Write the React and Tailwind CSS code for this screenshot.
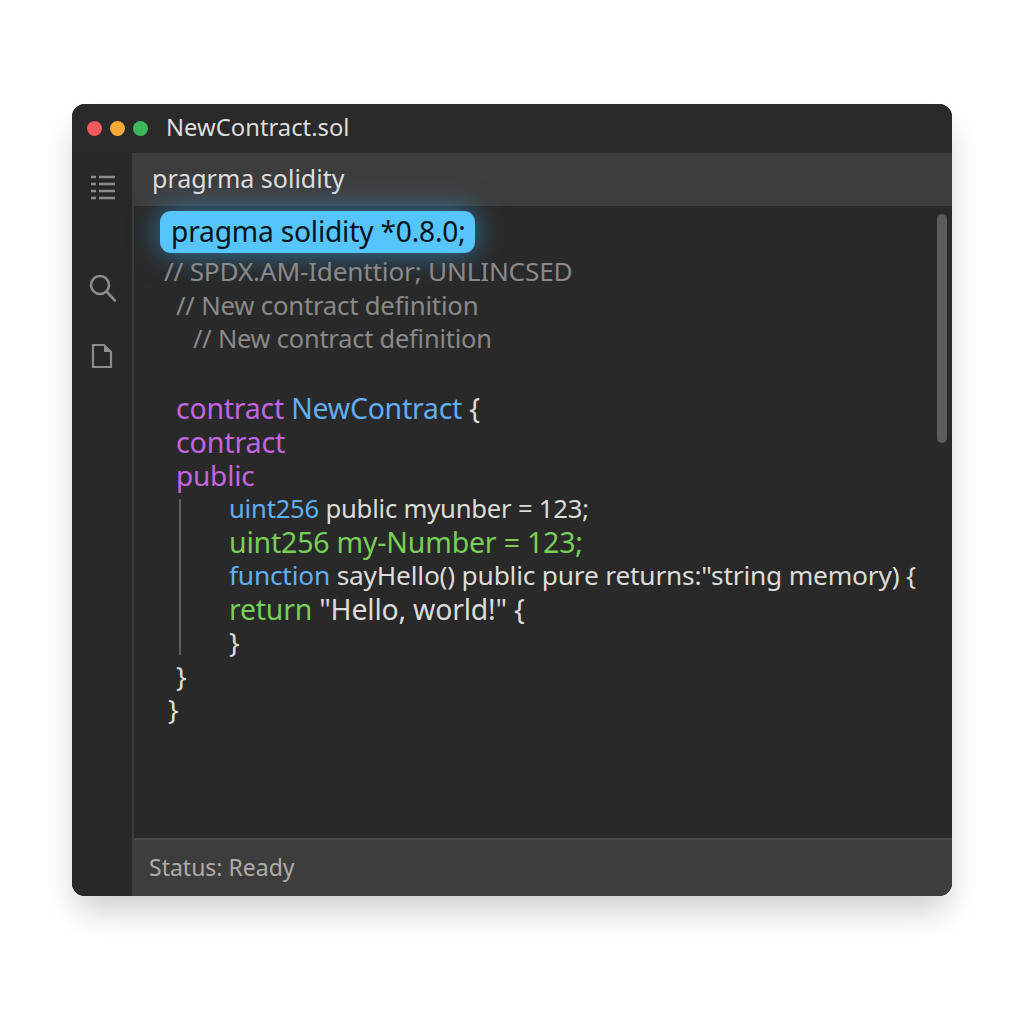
import React from 'react';

const font = { fontFamily: '"Noto Sans", "Open Sans", sans-serif' };

const Line = ({ indent = '', size = 'text-[26px]', children }) => (
    <div className={`h-[33.5px] leading-[31px] whitespace-nowrap ${indent} ${size}`}>{children}</div>
);

const Purple = ({ children }) => <span className="text-[#c465e0]">{children}</span>;
const Blue = ({ children }) => <span className="text-[#60aef3]">{children}</span>;
const Green = ({ children }) => <span className="text-[#78cf58]">{children}</span>;

const ListIcon = () => (
    <svg width="24" height="25" viewBox="0 0 24 25" fill="none" stroke="#8c8c8c" strokeWidth="2.6">
        <path d="M0 2h5M8 2h16M0 9h5M8 9h16M0 16h5M8 16h16M0 23h5M8 23h16" />
    </svg>
);

const SearchIcon = () => (
    <svg width="27" height="28" viewBox="0 0 27 28" fill="none" stroke="#8c8c8c" strokeWidth="2.6">
        <circle cx="11" cy="11" r="9" />
        <path d="M17.500 17.500L26 26.500" strokeLinecap="round" />
    </svg>
);

const FileIcon = () => (
    <svg width="22" height="26" viewBox="0 0 22 26" fill="none">
        <path d="M2 2h11l7 7v15H2z" stroke="#8c8c8c" strokeWidth="2.200" strokeLinejoin="miter" />
        <path d="M13 2l7 7h-7z" fill="#8c8c8c" />
    </svg>
);

const App = () => {
    return (
        <div className="min-h-screen bg-white pt-[104px] pl-[72px]" style={font}>
            <div className="relative w-[880px] h-[792px] flex flex-col bg-[#292929] rounded-[13px] overflow-hidden shadow-[0_18px_32px_-4px_rgba(0,0,0,0.2)]">
                <div className="h-[49px] shrink-0 flex items-center pl-[15px] bg-[#2a2a2a]">
                    <div className="flex gap-[8px]">
                        <span className="w-[15px] h-[15px] rounded-full bg-[#f2595a]" />
                        <span className="w-[15px] h-[15px] rounded-full bg-[#f7ab37]" />
                        <span className="w-[15px] h-[15px] rounded-full bg-[#3cb95a]" />
                    </div>
                    <span className="ml-[18px] pb-[2px] text-[23.800px] text-[#dedede] leading-none">NewContract.sol</span>
                </div>
                <div className="flex-1 flex min-h-0">
                    <div className="w-[62px] shrink-0 flex flex-col items-center border-r-2 border-[#3c3c3c] bg-[#282828]">
                        <div className="mt-[22px] ml-[2px]"><ListIcon /></div>
                        <div className="mt-[74px]"><SearchIcon /></div>
                        <div className="mt-[41px]"><FileIcon /></div>
                    </div>
                    <div className="relative flex-1 flex flex-col min-w-0">
                        <div className="h-[53px] shrink-0 flex items-center pl-[18px] pb-[2px] bg-[#3d3d3d] text-[25px] text-[#dedede]">
                            pragrma solidity
                        </div>
                        <div className="flex-1 text-[#dcdcd8] tracking-[-0.2px]">
                            <div className="pl-[26px] pt-[5px]">
                                <div className="w-[315px] h-[42px] flex items-center pl-[11px] pb-[2px] rounded-[11px] bg-[#56c5fb] text-[#08131b] text-[28.200px] shadow-[0_0_30px_rgba(64,180,255,0.6)]">
                                    pragma solidity *0.8.0;
                                </div>
                            </div>
                            <div className="mt-[3px] text-[#8a8a8a]">
                                <Line indent="pl-[30px]" size="text-[26.200px]">// SPDX.AM-Identtior; UNLINCSED</Line>
                                <Line indent="pl-[42px]" size="text-[25.700px]">// New contract definition</Line>
                                <Line indent="pl-[59px]" size="text-[25.400px]">// New contract definition</Line>
                            </div>
                            <div className="mt-[36px]">
                                <Line indent="pl-[42px]" size="text-[28.400px]"><Purple>contract</Purple> <Blue>NewContract</Blue> {'{'}</Line>
                                <Line indent="pl-[42px]" size="text-[28.700px]"><Purple>contract</Purple></Line>
                                <Line indent="pl-[42px]" size="text-[28px]"><Purple>public</Purple></Line>
                                <div className="flex pl-[45px]">
                                    <div className="w-[2px] my-[6px] shrink-0 bg-[#5e5e5e]" />
                                    <div className="pl-[48px]">
                                        <Line size="text-[25.600px]"><Blue>uint256</Blue> public myunber = 123;</Line>
                                        <Line size="text-[28.500px]"><Green>uint256 my-Number = 123;</Green></Line>
                                        <Line size="text-[26.300px]"><Blue>function</Blue> sayHello() public pure returns:"string memory) {'{'}</Line>
                                        <Line size="text-[28.400px]"><Green>return</Green> "Hello, world!" {'{'}</Line>
                                        <Line size="text-[28px]">{'}'}</Line>
                                    </div>
                                </div>
                                <Line indent="pl-[42px]" size="text-[28px]">{'}'}</Line>
                                <Line indent="pl-[34px]" size="text-[28px]">{'}'}</Line>
                            </div>
                        </div>
                        <div className="h-[58px] shrink-0 flex items-center pl-[15px] pb-[2px] bg-[#3d3d3d] border-t-2 border-[#4a4a4a] text-[23px] text-[#aeaca8]">
                            Status: Ready
                        </div>
                        <div className="absolute top-[61px] right-[5px] w-[10px] h-[229px] rounded-full bg-[#5c5c5c]" />
                    </div>
                </div>
            </div>
        </div>
    );
};

export default App;
